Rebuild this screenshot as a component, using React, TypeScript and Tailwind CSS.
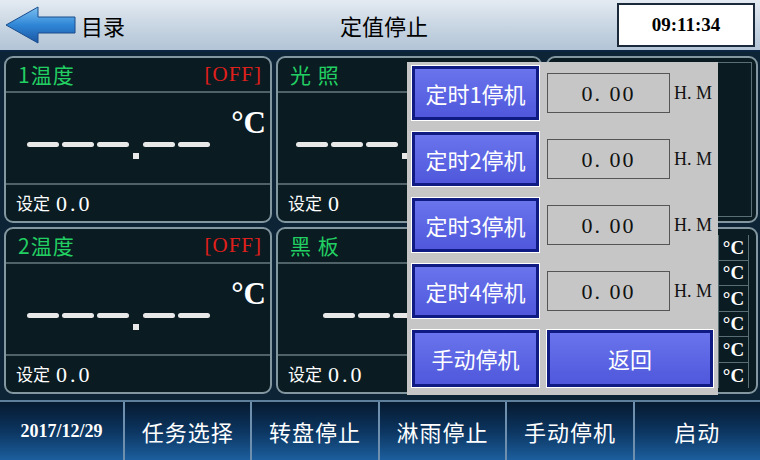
import React from 'react'

const cjk = "font-['Noto_Sans_CJK_SC',sans-serif]"
const serif = "font-['Liberation_Serif','Noto_Sans_CJK_SC',serif]"

function Dashes({ offset }: { offset: number }) {
  return (
    <div className="flex items-start gap-[3px]" style={{ marginLeft: offset }}>
      <div className="w-[32px] h-[5px] rounded-full bg-[#e8e8e8]" />
      <div className="w-[32px] h-[5px] rounded-full bg-[#e8e8e8]" />
      <div className="w-[32px] h-[5px] rounded-full bg-[#e8e8e8]" />
      <div className="w-[6px] h-[6px] mt-[11px] mx-[1px] bg-[#e8e8e8]" />
      <div className="w-[32px] h-[5px] rounded-full bg-[#e8e8e8]" />
      <div className="w-[32px] h-[5px] rounded-full bg-[#e8e8e8]" />
    </div>
  )
}

function SensorCard({
  title,
  off,
  setting,
  offset,
  hidden,
}: {
  title: string
  off?: boolean
  setting: string
  offset: number
  hidden?: boolean
}) {
  return (
    <div className="rounded-[9px] border-2 border-[#8297a0] bg-[#0a1b21] flex flex-col overflow-hidden">
      <div className="h-[35px] flex items-center justify-between pl-[12px] pr-[8px] border-b-2 border-[#4f6268]">
        <span className={`${cjk} text-[21px] text-[#22cf63] tracking-[1px]`}>{title}</span>
        {off && <span className={`${serif} text-[21px] text-[#e0201c] tracking-[1px]`}>[OFF]</span>}
      </div>
      <div className="flex-1 flex justify-between pr-[4px]">
        <div className="pt-[49px]">
          <Dashes offset={offset} />
        </div>
        {/* the unit of the cards under the popup is covered anyway */}
        {!hidden && (
          <span className={`${serif} font-bold text-[31px] leading-none text-white pt-[14px]`}>°C</span>
        )}
      </div>
      <div className="h-[38px] flex items-center pl-[10px] border-t-2 border-[#4f6268] gap-[6px]">
        <span className={`${cjk} text-[17px] text-white`}>设定</span>
        <span className={`${serif} text-[22px] text-white tracking-[3px]`}>{setting}</span>
      </div>
    </div>
  )
}

function BlueButton({ label, wide }: { label: string; wide?: boolean }) {
  return (
    <div className={`border border-white ${wide ? 'w-[168px]' : 'w-[129px]'} h-full`}>
      <div className="h-full border-[3px] border-[#0f1a82] bg-gradient-to-b from-[#6a74ec] to-[#5057dc] flex items-center justify-center">
        <span className={`${cjk} text-[22px] text-white`}>{label}</span>
      </div>
    </div>
  )
}

function TimerRow({ n }: { n: number }) {
  return (
    <div className="h-[56px] flex items-center">
      <BlueButton label={`定时${n}停机`} />
      <div className="ml-[7px] w-[123px] h-[40px] border border-[#555] flex items-center justify-center">
        <span className={`${serif} text-[22px] text-[#111] tracking-[2px]`}>0. 00</span>
      </div>
      <span className={`${serif} ml-[4px] text-[18px] text-[#111]`}>H. M</span>
    </div>
  )
}

export default function App() {
  const tabs = ['任务选择', '转盘停止', '淋雨停止', '手动停机', '启动']

  return (
    <div className="w-[760px] h-[460px] flex flex-col bg-[#0d2436] overflow-hidden">
      {/* top bar */}
      <div className="h-[52px] flex items-center bg-gradient-to-b from-[#e4ebf2] via-[#c9d6e3] to-[#b2c4d6] border-b-2 border-[#0c2540] px-[5px]">
        <svg width="72" height="38" viewBox="0 0 72 38">
          <defs>
            <linearGradient id="arr" x1="0" y1="0" x2="0" y2="1">
              <stop offset="0" stopColor="#7cc0f0" />
              <stop offset="0.5" stopColor="#2f86d6" />
              <stop offset="1" stopColor="#1b56a4" />
            </linearGradient>
          </defs>
          <polygon
            points="1,19 33,1 33,11 70,11 70,27 33,27 33,37"
            fill="url(#arr)"
            stroke="#1a4d8c"
            strokeWidth="1"
          />
        </svg>
        <span className={`${cjk} text-[22px] text-black ml-[4px]`}>目录</span>
        <div className="flex-1 flex justify-center pl-[26px]">
          <span className={`${cjk} text-[22px] text-black`}>定值停止</span>
        </div>
        <div className="w-[138px] h-[44px] bg-white border-2 border-[#1b2a3a] flex items-center justify-center">
          <span className={`${serif} font-bold text-[19px] text-black`}>09:11:34</span>
        </div>
      </div>

      {/* main area */}
      <div className="relative flex-1 pt-[4px] pl-[4px]">
        <div className="grid grid-cols-[268px_266px_212px] grid-rows-[167px_167px] gap-[4px]">
          <SensorCard title="1温度" off setting="0.0" offset={21} />
          <SensorCard title="光 照" setting="0" offset={18} hidden />
          <div className="rounded-[9px] border-2 border-[#8297a0] bg-[#0a1b21] p-[4px]">
            <div className="h-full border border-[#5a6f75] flex items-start justify-end pt-[40px] pr-[34px]">
              <div className="w-[6px] h-[2px] bg-white" />
            </div>
          </div>
          <SensorCard title="2温度" off setting="0.0" offset={21} />
          <SensorCard title="黑 板" setting="0.0" offset={45} hidden />
          <div className="rounded-[9px] border-2 border-[#8297a0] bg-[#0a1b21] pt-[6px] pb-[4px] pr-[7px]">
            <div className="h-full grid grid-rows-6 border-r border-[#5a6f75]">
              {[0, 1, 2, 3, 4, 5].map((i) => (
                <div key={i} className="flex justify-end border-b border-[#5a6f75] last:border-b-0">
                  <div className="w-[30px] border-l border-[#5a6f75] flex items-center justify-center">
                    <span className={`${serif} font-bold text-[19px] text-white leading-none`}>°C</span>
                  </div>
                </div>
              ))}
            </div>
          </div>
        </div>

        {/* timer settings popup */}
        <div className="absolute left-[407px] top-[10px] w-[311px] h-[333px] bg-[#c6c6c6] pl-[4px] pt-[3px] flex flex-col gap-[10px]">
          <TimerRow n={1} />
          <TimerRow n={2} />
          <TimerRow n={3} />
          <TimerRow n={4} />
          <div className="h-[59px] flex gap-[6px]">
            <BlueButton label="手动停机" />
            <BlueButton label="返回" wide />
          </div>
        </div>
      </div>

      {/* bottom bar */}
      <div className="h-[60px] flex bg-gradient-to-b from-[#061a30] via-[#0c3560] to-[#1c5f9e] border-t-2 border-[#5d7f9c]">
        <div className="w-[125px] flex items-center justify-center border-r-2 border-[#6f8fae]">
          <span className={`${serif} font-bold text-[18px] text-white`}>2017/12/29</span>
        </div>
        {tabs.map((t, i) => (
          <div
            key={t}
            className={`flex-1 flex items-center justify-center ${i < tabs.length - 1 ? 'border-r-2 border-[#6f8fae]' : ''}`}
          >
            <span className={`${cjk} text-[22px] text-white tracking-[1px]`}>{t}</span>
          </div>
        ))}
      </div>
    </div>
  )
}
